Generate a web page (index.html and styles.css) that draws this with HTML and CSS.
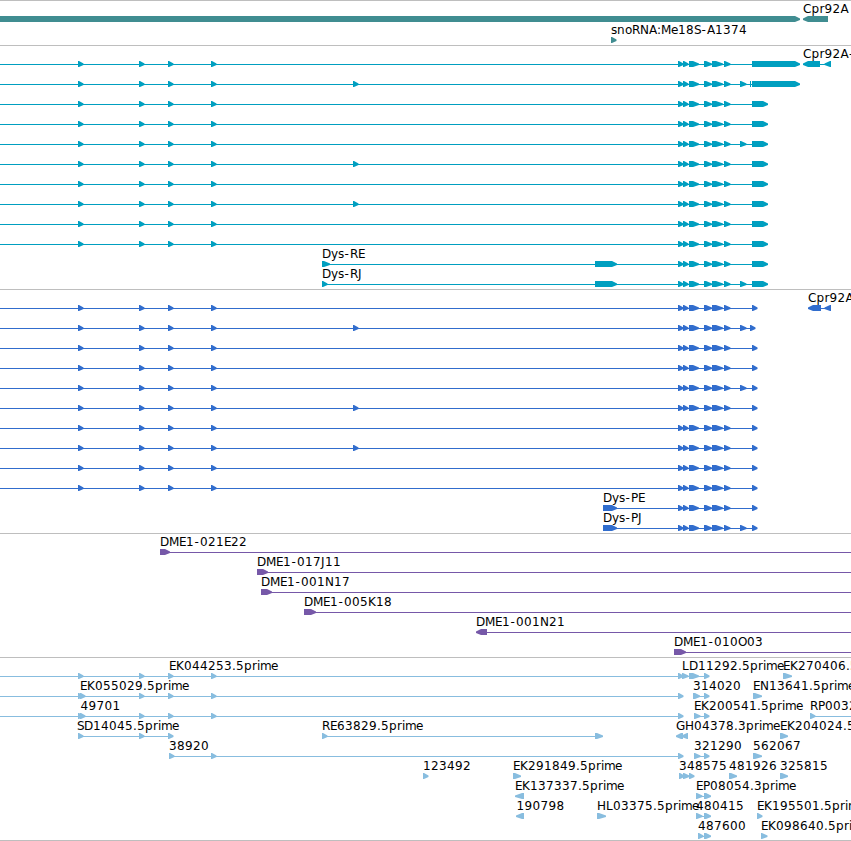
FILE: index.html
```html
<!DOCTYPE html>
<html lang="en">
<head>
<meta charset="utf-8">
<title>Genome tracks</title>
<link rel="stylesheet" href="styles.css">
</head>
<body>
<main class="tracks" id="tracks"></main>
<script src="tracks.js"></script>
</body>
</html>
```
FILE: styles.css
```css
* { box-sizing: border-box; }
body {
  margin: 0;
  background: #fff;
  overflow: hidden;
}
.tracks {
  display: flex;
  flex-direction: column;
  width: 851px;
  height: 841px;
  border-bottom: 1px solid #bebebe;
}
.track {
  flex: none;
  border-top: 1px solid #bebebe;
  overflow: hidden;
}
.track svg {
  display: block;
  fill: currentColor;
}
.track text {
  fill: #000;
  font: 12px "DejaVu Sans", sans-serif;
  font-kerning: none;
}
.gene { color: #408d91; }
.transcript { color: #009fc0; }
.cds { color: #316dcd; }
.bac { color: #7658a8; }
.est { color: #88bddf; }
```
FILE: tracks.js
```js
// Advance widths for the label characters.
const ADVANCE = { '.': 4, ':': 4, '-': 6, i: 3, r: 5, m: 11, e: 7, o: 7, s: 6, n: 8, p: 8, y: 7,
  D: 9, M: 10, E: 7, K: 8, R: 8, P: 7, J: 4, N: 9, A: 8, S: 7, C: 8.5, L: 7, G: 9, H: 9, O: 9 };

const five = [[78, 83], [139, 144], [168, 173], [211, 216]];
const mid = [353, 358];
const three = [[678, 683], [683, 688], [689, 691], [691, 699], [704, 712], [712, 714], [714, 723], [724, 730]];
const extra = [740, 746];

// Each feature: row, exons, and optional label, labelX, line start/end, reverse.
const f = (row, exons, o = {}) => ({ row, exons, ...o });
const named = (row, label, labelX, exons, o = {}) => f(row, exons, { label, labelX, ...o });

function isoforms(last) {
  return Array.from({ length: 10 }, (_, i) => f(i, [
    ...five, ...([1, 5, 7].includes(i) ? [mid] : []), ...three,
    ...([1, 4].includes(i) ? [extra] : []), ...last(i)], { from: 0 }));
}

const tracks = [
  { kind: 'gene', height: 45, pitch: 21, items: [
    f(0, [[-20, 800]]),
    named(0, 'Cpr92A', 803, [[803, 828]], { rev: 1 }),
    named(1, 'snoRNA:Me18S-A1374', 611, [[611, 616]])] },
  { kind: 'transcript', height: 244, items: [
    ...isoforms(i => i === 0 ? [[752, 800]] : i === 1 ? [[750, 751], [752, 800]] : [[752, 768]]),
    named(0, 'Cpr92A-RA', 803, [[803, 820], [825, 831]], { rev: 1 }),
    named(10, 'Dys-RE', 322, [[322, 330], [595, 617], ...three, [752, 768]]),
    named(11, 'Dys-RJ', 322, [[322, 327], [595, 617], ...three, extra, [752, 768]])] },
  { kind: 'cds', height: 244, items: [
    ...isoforms(i => i === 1 ? [[750, 755]] : [[752, 757]]),
    named(0, 'Cpr92A-PA', 808, [[808, 821], [825, 831]], { rev: 1 }),
    named(10, 'Dys-PE', 603, [[603, 617], ...three, [752, 757]]),
    named(11, 'Dys-PJ', 603, [[603, 617], ...three, extra, [752, 757]])] },
  { kind: 'bac', height: 124, items: [
    named(0, 'DME1-021E22', 160, [[160, 170]], { to: 851 }),
    named(1, 'DME1-017J11', 257, [[257, 268]], { to: 851 }),
    named(2, 'DME1-001N17', 261, [[261, 272]], { to: 851 }),
    named(3, 'DME1-005K18', 304, [[304, 316]], { to: 851 }),
    named(4, 'DME1-001N21', 476, [[476, 487]], { to: 851, rev: 1 }),
    named(5, 'DME1-010O03', 674, [[674, 686]], { to: 851 })] },
  { kind: 'est', height: 183, items: [
    named(0, 'EK044253.5prime', 169, five, { from: 0, to: 678 }),
    named(0, 'LD11292.5prime', 682, [[678, 683], [682, 688], [689, 691], [691, 699], [704, 709]]),
    named(0, 'EK270406.5prime', 783, [[783, 792]]),
    named(1, 'EK055029.5prime', 80, [...five, [80, 85], [678, 683]], { from: 0 }),
    named(1, '314020', 693, [[693, 700], [704, 709]]),
    named(1, 'EN13641.5prime', 753, [[753, 762]]),
    named(2, '49701', 80.5, [...five, [80, 85], [678, 683]], { from: 0 }),
    named(2, 'EK200541.5prime', 694, [[694, 700], [704, 709]]),
    named(2, 'RP00327.5prime', 810, [[810, 815]], { to: 851 }),
    named(3, 'SD14045.5prime', 77, five.slice(0, 3)),
    named(3, 'RE63829.5prime', 322, [[322, 327], [595, 603]]),
    named(3, 'GH04378.3prime', 676, [[676, 683], [682, 688]], { rev: 1 }),
    named(3, 'EK204024.5prime', 780, [[780, 788]]),
    named(4, '38920', 169, [[169, 174], [211, 216], [678, 683]]),
    named(4, '321290', 694, [[694, 700], [704, 709]]),
    named(4, '562067', 753, [[753, 762]]),
    named(5, '123492', 423, [[423, 428]]),
    named(5, 'EK291849.5prime', 513, [[513, 521]]),
    named(5, '348575', 679, [[679, 684], [683, 689], [689, 694]]),
    named(5, '481926', 729, [[729, 737]]),
    named(5, '325815', 780, [[780, 788]]),
    named(6, 'EK137337.5prime', 515, [[515, 524]], { rev: 1 }),
    named(6, 'EP08054.3prime', 696, [[696, 702], [704, 711]]),
    named(7, '190798', 516.5, [[516, 524]], { rev: 1 }),
    named(7, 'HL03375.5prime', 597, [[597, 606]]),
    named(7, '480415', 696, [[696, 702], [704, 711]]),
    named(7, 'EK195501.5prime', 757, [[757, 762]]),
    named(8, '487600', 698, [[698, 703], [704, 711]]),
    named(8, 'EK098640.5prime', 761, [[761, 767]])] },
];

function exonPath([a, b], y, rev) {
  const w = b - a;
  if (w < 4) return `M${a} ${y}H${b}V${y + 6}H${a}Z`;
  const shoulder = w < 7 ? 1 : w < 10 ? 2 : w - 5;
  const point = w < 7 ? 0.5 : 0;
  return rev
    ? `M${b} ${y}H${b - shoulder}L${a - point} ${y + 2.5}V${y + 4}L${b - shoulder} ${y + 6}H${b}Z`
    : `M${a} ${y}H${a + shoulder}L${b + point} ${y + 2.5}V${y + 4}L${a + shoulder} ${y + 6}H${a}Z`;
}

function labelSvg(item, y) {
  let x = item.labelX;
  const xs = [...item.label].map(c => {
    const at = c === '-' ? x + 0.5 : x;
    x += ADVANCE[c] || 8;
    return at;
  });
  return `<text x="${xs.join(' ')}" y="${y}">${item.label}</text>`;
}

document.getElementById('tracks').innerHTML = tracks.map(t => {
  let shapes = '', labels = '';
  for (const item of t.items) {
    const top = item.row * (t.pitch || 20) + 15;
    const from = item.from ?? item.exons[0][0];
    const to = item.to ?? item.exons[item.exons.length - 1][1];
    if (item.exons.length > 1 || item.to)
      shapes += `<rect x="${from}" y="${top + 3}" width="${to - from}" height="1"/>`;
    shapes += item.exons.map(e => `<path d="${exonPath(e, top, item.rev)}"/>`).join('');
    if (item.label) labels += labelSvg(item, top - 3);
  }
  return `<section class="track ${t.kind}"><svg width="851" height="${t.height - 1}">${shapes}${labels}</svg></section>`;
}).join('');
```
